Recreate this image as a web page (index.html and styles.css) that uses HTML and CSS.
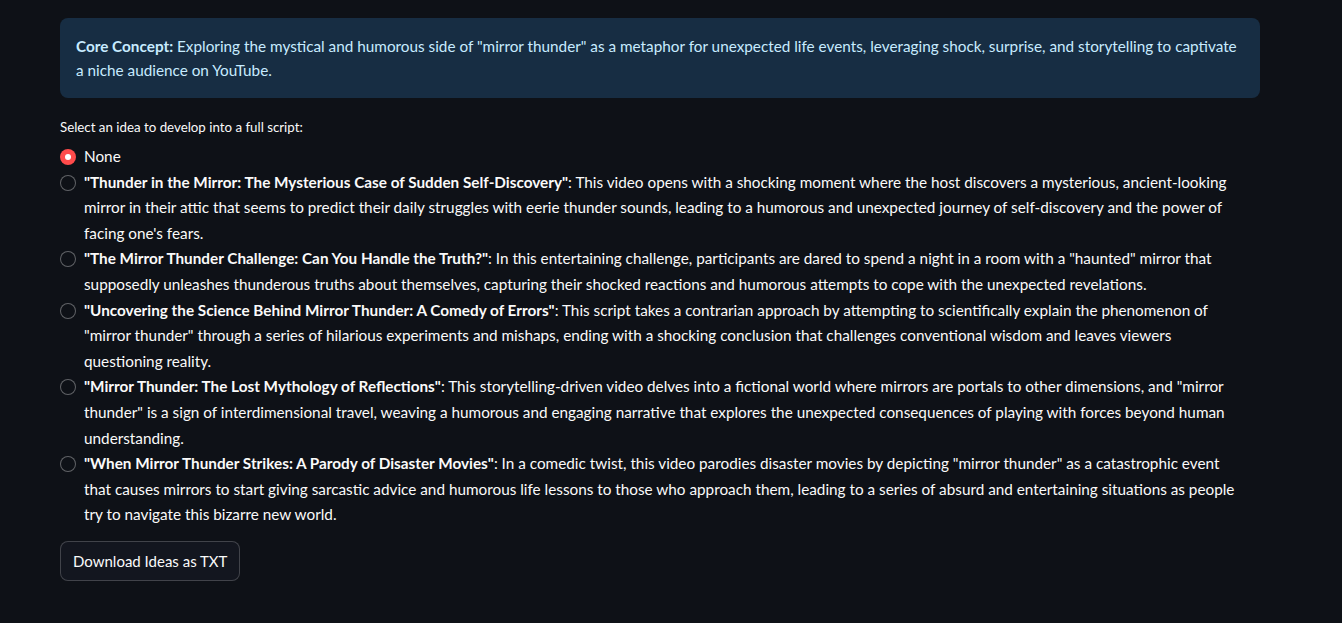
FILE: index.html
```html
<!DOCTYPE html>
<html lang="en">
<head>
<meta charset="utf-8">
<title>Mirror Thunder Ideas</title>
<link rel="stylesheet" href="styles.css">
</head>
<body>
<main class="main">
  <div class="alert">
    <p><strong>Core Concept:</strong> Exploring the mystical and humorous side of "mirror thunder" as a metaphor for unexpected life events, leveraging shock, surprise, and storytelling to captivate a niche audience on YouTube.</p>
  </div>

  <div class="radio-group">
    <div class="radio-label">Select an idea to develop into a full script:</div>
    <div class="options">
      <label class="option">
        <span class="dot checked"></span>
        <span class="opt-text">None</span>
      </label>
      <label class="option">
        <span class="dot"></span>
        <span class="opt-text"><strong>"Thunder in the Mirror: The Mysterious Case of Sudden Self-Discovery"</strong>: This video opens with a shocking moment where the host discovers a mysterious, ancient-looking mirror in their attic that seems to predict their daily struggles with eerie thunder sounds, leading to a humorous and unexpected journey of self-discovery and the power of facing one's fears.</span>
      </label>
      <label class="option">
        <span class="dot"></span>
        <span class="opt-text"><strong>"The Mirror Thunder Challenge: Can You Handle the Truth?"</strong>: In this entertaining challenge, participants are dared to spend a night in a room with a "haunted" mirror that supposedly unleashes thunderous truths about themselves, capturing their shocked reactions and humorous attempts to cope with the unexpected revelations.</span>
      </label>
      <label class="option">
        <span class="dot"></span>
        <span class="opt-text"><strong>"Uncovering the Science Behind Mirror Thunder: A Comedy of Errors"</strong>: This script takes a contrarian approach by attempting to scientifically explain the phenomenon of "mirror thunder" through a series of hilarious experiments and mishaps, ending with a shocking conclusion that challenges conventional wisdom and leaves viewers questioning reality.</span>
      </label>
      <label class="option">
        <span class="dot"></span>
        <span class="opt-text"><strong>"Mirror Thunder: The Lost Mythology of Reflections"</strong>: This storytelling-driven video delves into a fictional world where mirrors are portals to other dimensions, and "mirror thunder" is a sign of interdimensional travel, weaving a humorous and engaging narrative that explores the unexpected consequences of playing with forces beyond human understanding.</span>
      </label>
      <label class="option">
        <span class="dot"></span>
        <span class="opt-text"><strong>"When Mirror Thunder Strikes: A Parody of Disaster Movies"</strong>: In a comedic twist, this video parodies disaster movies by depicting "mirror thunder" as a catastrophic event that causes mirrors to start giving sarcastic advice and humorous life lessons to those who approach them, leading to a series of absurd and entertaining situations as people try to navigate this bizarre new world.</span>
      </label>
    </div>
  </div>

  <div class="actions">
    <button class="btn" type="button">Download Ideas as TXT</button>
  </div>
</main>
</body>
</html>
```
FILE: styles.css
```css
* { box-sizing: border-box; }
html, body {
  margin: 0;
  padding: 0;
  background: #0e1117;
  color: #fafafa;
  font-family: Lato, "Noto Sans", sans-serif;
}
.main {
  width: 1200px;
  margin: 0 0 0 60px;
  padding-top: 18px;
  display: flex;
  flex-direction: column;
}
.alert {
  background: #172d43;
  color: #c7ebff;
  border-radius: 8px;
  padding: 16px;
  font-size: 15.3px;
  line-height: 24px;
}
.alert p { margin: 0; }
.alert strong { font-weight: 700; }
.radio-group {
  margin-top: 20px;
}
.radio-label {
  font-size: 13.3px;
  line-height: 18px;
  margin-bottom: 8px;
}
.options {
  display: flex;
  flex-direction: column;
}
.option {
  display: flex;
  align-items: flex-start;
  gap: 8px;
  padding-right: 20px;
  font-size: 15.3px;
  line-height: 25.6px;
}
.dot {
  flex: none;
  width: 16px;
  height: 16px;
  margin-top: 5px;
  border-radius: 50%;
  border: 1px solid rgba(250, 250, 250, 0.35);
  background: #0e1117;
}
.dot.checked {
  border: none;
  background: #ff4b4b;
  position: relative;
}
.dot.checked::after {
  content: "";
  position: absolute;
  left: 5px;
  top: 5px;
  width: 6px;
  height: 6px;
  border-radius: 50%;
  background: #fff;
}
.opt-text strong {
  font-weight: 700;
}
.actions {
  margin-top: 13px;
}
.btn {
  font-family: inherit;
  font-size: 15px;
  color: #fafafa;
  background: #13161f;
  border: 1px solid rgba(250, 250, 250, 0.2);
  border-radius: 8px;
  height: 40px;
  padding: 0 12px;
}
```
